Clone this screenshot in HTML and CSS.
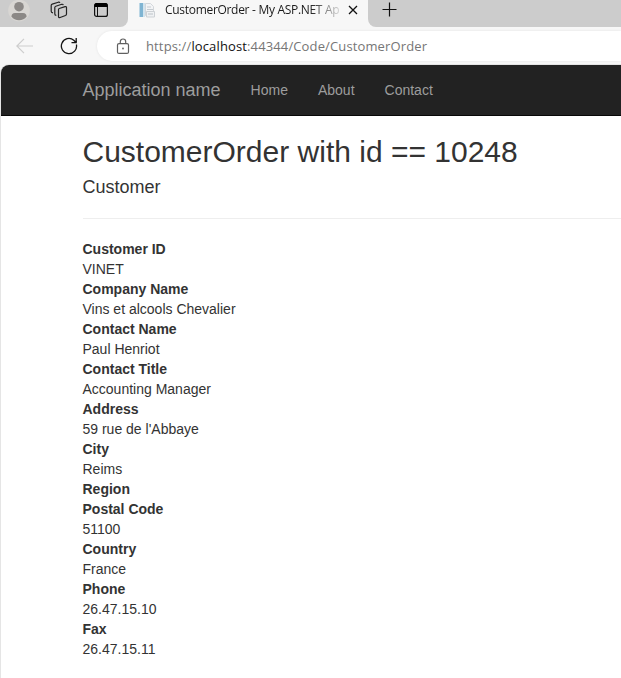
FILE: index.html
```
<!DOCTYPE html>
<html lang="en">
<head>
<meta charset="utf-8">
<title>CustomerOrder - My ASP.NET Application</title>
<link rel="stylesheet" href="styles.css">
</head>
<body>
<header class="browser">
  <div class="tabs">
    <div class="tabs-left">
      <svg class="avatar" width="22" height="22" viewBox="0 0 22 22"><circle cx="11" cy="10.500" r="10.800" fill="#d8d6d3"/><circle cx="11" cy="6.700" r="4.800" fill="#8b8886"/><path d="M3.500 16.500q0-3.500 3.500-3.500h8q3.500 0 3.500 3.500c-3 5-12 5-15 0z" fill="#8b8886"/></svg>
      <svg class="stack" width="18" height="18" viewBox="0 0 18 18" fill="none" stroke="#222" stroke-width="1.200" stroke-linejoin="round"><path d="M9.200 7.500l5.900-1.900q1.400-.3 1.400 1v6.500q0 1-1 1.400l-5.400 2q-1.600.4-1.600-1V8.600q0-.8.700-1.100z"/><path d="M6.300 14.300q-1.500 0-1.500-1.300V6.500q0-1 1-1.300l5.900-1.900q1.300-.3 1.600.8"/><path d="M3 11.900Q1.200 11.600 1.200 10.200V4.400q0-1 1-1.300L8.300 1.200q1.200-.3 1.600.7"/></svg>
      <svg class="panel" width="16" height="16" viewBox="0 0 16 16"><rect x="1.600" y="1.600" width="12.800" height="12.800" rx="2" fill="none" stroke="#111" stroke-width="1.200"/><path d="M1.500 5V3q0-2 2-2h9q2 0 2 2v2z" fill="#000"/><path d="M4.500 5v9" stroke="#111"/></svg>
    </div>
    <div class="tab">
      <svg class="favicon" width="17" height="17" viewBox="0 0 17 17"><path d="M.5 1h3.500v14H.5z" fill="#7fb4d2"/><path d="M4 1h2v14H4z" fill="#d3e4ee"/><path d="M6.500 1.500h5l3 3v9h-8z" fill="#f3f4f6" stroke="#d3d7db"/><path d="M8 5h4M8 7.500h6" stroke="#c5cbd0"/><path d="M7.500 9.500h8v5.500h-8z" fill="#eff1f3" stroke="#cdd1d5"/><path d="M9 12h5" stroke="#bcc2c7"/></svg>
      <span class="tab-title">CustomerOrder - My ASP.NET Ap</span>
      <svg class="close" width="10" height="10" viewBox="0 0 10 10"><path d="M1 1l8 8M9 1L1 9" stroke="#111" stroke-width="1.300"/></svg>
    </div>
    <div class="tabs-right">
      <svg class="plus" width="15" height="15" viewBox="0 0 15 15"><path d="M7.500.5v14M.5 7.500h14" stroke="#111" stroke-width="1.200"/></svg>
    </div>
  </div>
  <div class="toolbar">
    <svg class="back" width="18" height="16" viewBox="0 0 18 16" fill="none" stroke="#cdcdcd" stroke-width="1.200"><path d="M8 .8L.8 8 8 15.200M1 8h16"/></svg>
    <svg class="reload" width="18" height="18" viewBox="0 0 18 18" fill="none" stroke="#151515" stroke-width="1.300"><path d="M16.400 7.500A7.600 7.600 0 1 1 13.800 3.200L16 5.500M16.200 1v4.600H11.500"/></svg>
    <div class="address">
      <svg class="lock" width="14" height="17" viewBox="0 0 14 17" fill="none" stroke="#606060" stroke-width="1.200"><rect x="1.500" y="5.600" width="11" height="9.800" rx="1.500"/><path d="M4.300 5.500V3.700a2.700 2.700 0 0 1 5.400 0v1.800"/><circle cx="7" cy="10.500" r=".9" fill="#606060" stroke="none"/></svg>
      <span class="url">https://<b>localhost</b>:44344/Code/CustomerOrder</span>
    </div>
  </div>
</header>
<div class="page">
  <nav class="navbar">
    <a class="brand">Application name</a>
    <a>Home</a>
    <a>About</a>
    <a>Contact</a>
  </nav>
  <main>
    <h2>CustomerOrder with id == 10248</h2>
    <h4>Customer</h4>
    <hr>
    <dl>
      <dt>Customer ID</dt><dd>VINET</dd>
      <dt>Company Name</dt><dd>Vins et alcools Chevalier</dd>
      <dt>Contact Name</dt><dd>Paul Henriot</dd>
      <dt>Contact Title</dt><dd>Accounting Manager</dd>
      <dt>Address</dt><dd>59 rue de l'Abbaye</dd>
      <dt>City</dt><dd>Reims</dd>
      <dt>Region</dt><dd></dd>
      <dt>Postal Code</dt><dd>51100</dd>
      <dt>Country</dt><dd>France</dd>
      <dt>Phone</dt><dd>26.47.15.10</dd>
      <dt>Fax</dt><dd>26.47.15.11</dd>
    </dl>
  </main>
</div>
</body>
</html>
```
FILE: styles.css
```
* { box-sizing: border-box; }
body {
  margin: 0;
  height: 678px;
  overflow: hidden;
  background: #f7f7f7;
  font: 14px/20px "Liberation Sans", Arial, sans-serif;
  color: #333;
}
svg { display: block; flex: none; }
.browser { height: 65px; font-family: "Open Sans", sans-serif; }
.tabs { display: flex; height: 27px; }
.tabs-left {
  display: flex;
  width: 128px;
  background: #ccc;
  border-bottom-right-radius: 8px;
  padding-left: 8px;
}
.stack { margin: 1px 0 0 20px; }
.panel { margin: 2px 0 0 25px; }
.tab { display: flex; width: 240px; padding-left: 11px; }
.favicon { margin-top: 2px; }
.tab-title {
  width: 175px;
  margin-left: 9px;
  white-space: nowrap;
  font-size: 12px;
  letter-spacing: -.3px;
  line-height: 20px;
  color: #1b1b1b;
  -webkit-mask-image: linear-gradient(90deg, #000 145px, transparent 180px);
  mask-image: linear-gradient(90deg, #000 145px, transparent 180px);
}
.close { margin: 5px 0 0 8px; }
.tabs-right {
  flex: 1;
  background: #ccc;
  border-bottom-left-radius: 8px;
  padding: 2px 0 0 14px;
}
.toolbar { display: flex; height: 38px; padding: 4px 0 4px 16px; }
.back { margin-top: 7px; }
.reload { margin: 6px 0 0 26px; }
.address {
  display: flex;
  flex: 1;
  height: 30px;
  margin-left: 19px;
  padding-left: 19px;
  background: #fff;
  border-radius: 15px 0 0 15px;
  box-shadow: 0 0 3px rgba(0, 0, 0, .08);
}
.lock { margin-top: 7px; }
.url { margin-left: 16px; font-size: 13px; letter-spacing: .13px; line-height: 30px; color: #767676; white-space: nowrap; }
.url b { font-weight: 400; color: #111; }
.page {
  height: 613px;
  margin-left: 1px;
  background: #fff;
  border-top-left-radius: 8px;
  box-shadow: 0 0 0 1px #e5e5e5;
}
.navbar {
  display: flex;
  height: 51px;
  padding-left: 81.5px;
  background: #222;
  border-bottom: 1px solid #080808;
  border-top-left-radius: 8px;
  color: #9d9d9d;
  line-height: 50px;
}
.navbar a { margin-right: 30px; }
.navbar .brand { font-size: 18px; }
main { padding: 19px 0 0 81.5px; }
h2, h4 { margin: 0; font-weight: 400; line-height: 1.1; white-space: nowrap; }
h2 { font-size: 30px; }
h4 { margin-top: 10px; font-size: 18px; }
hr { margin: 20px 0; border: 0; border-top: 1px solid #eee; }
dl, dd { margin: 0; }
dt { font-weight: 700; }
```
